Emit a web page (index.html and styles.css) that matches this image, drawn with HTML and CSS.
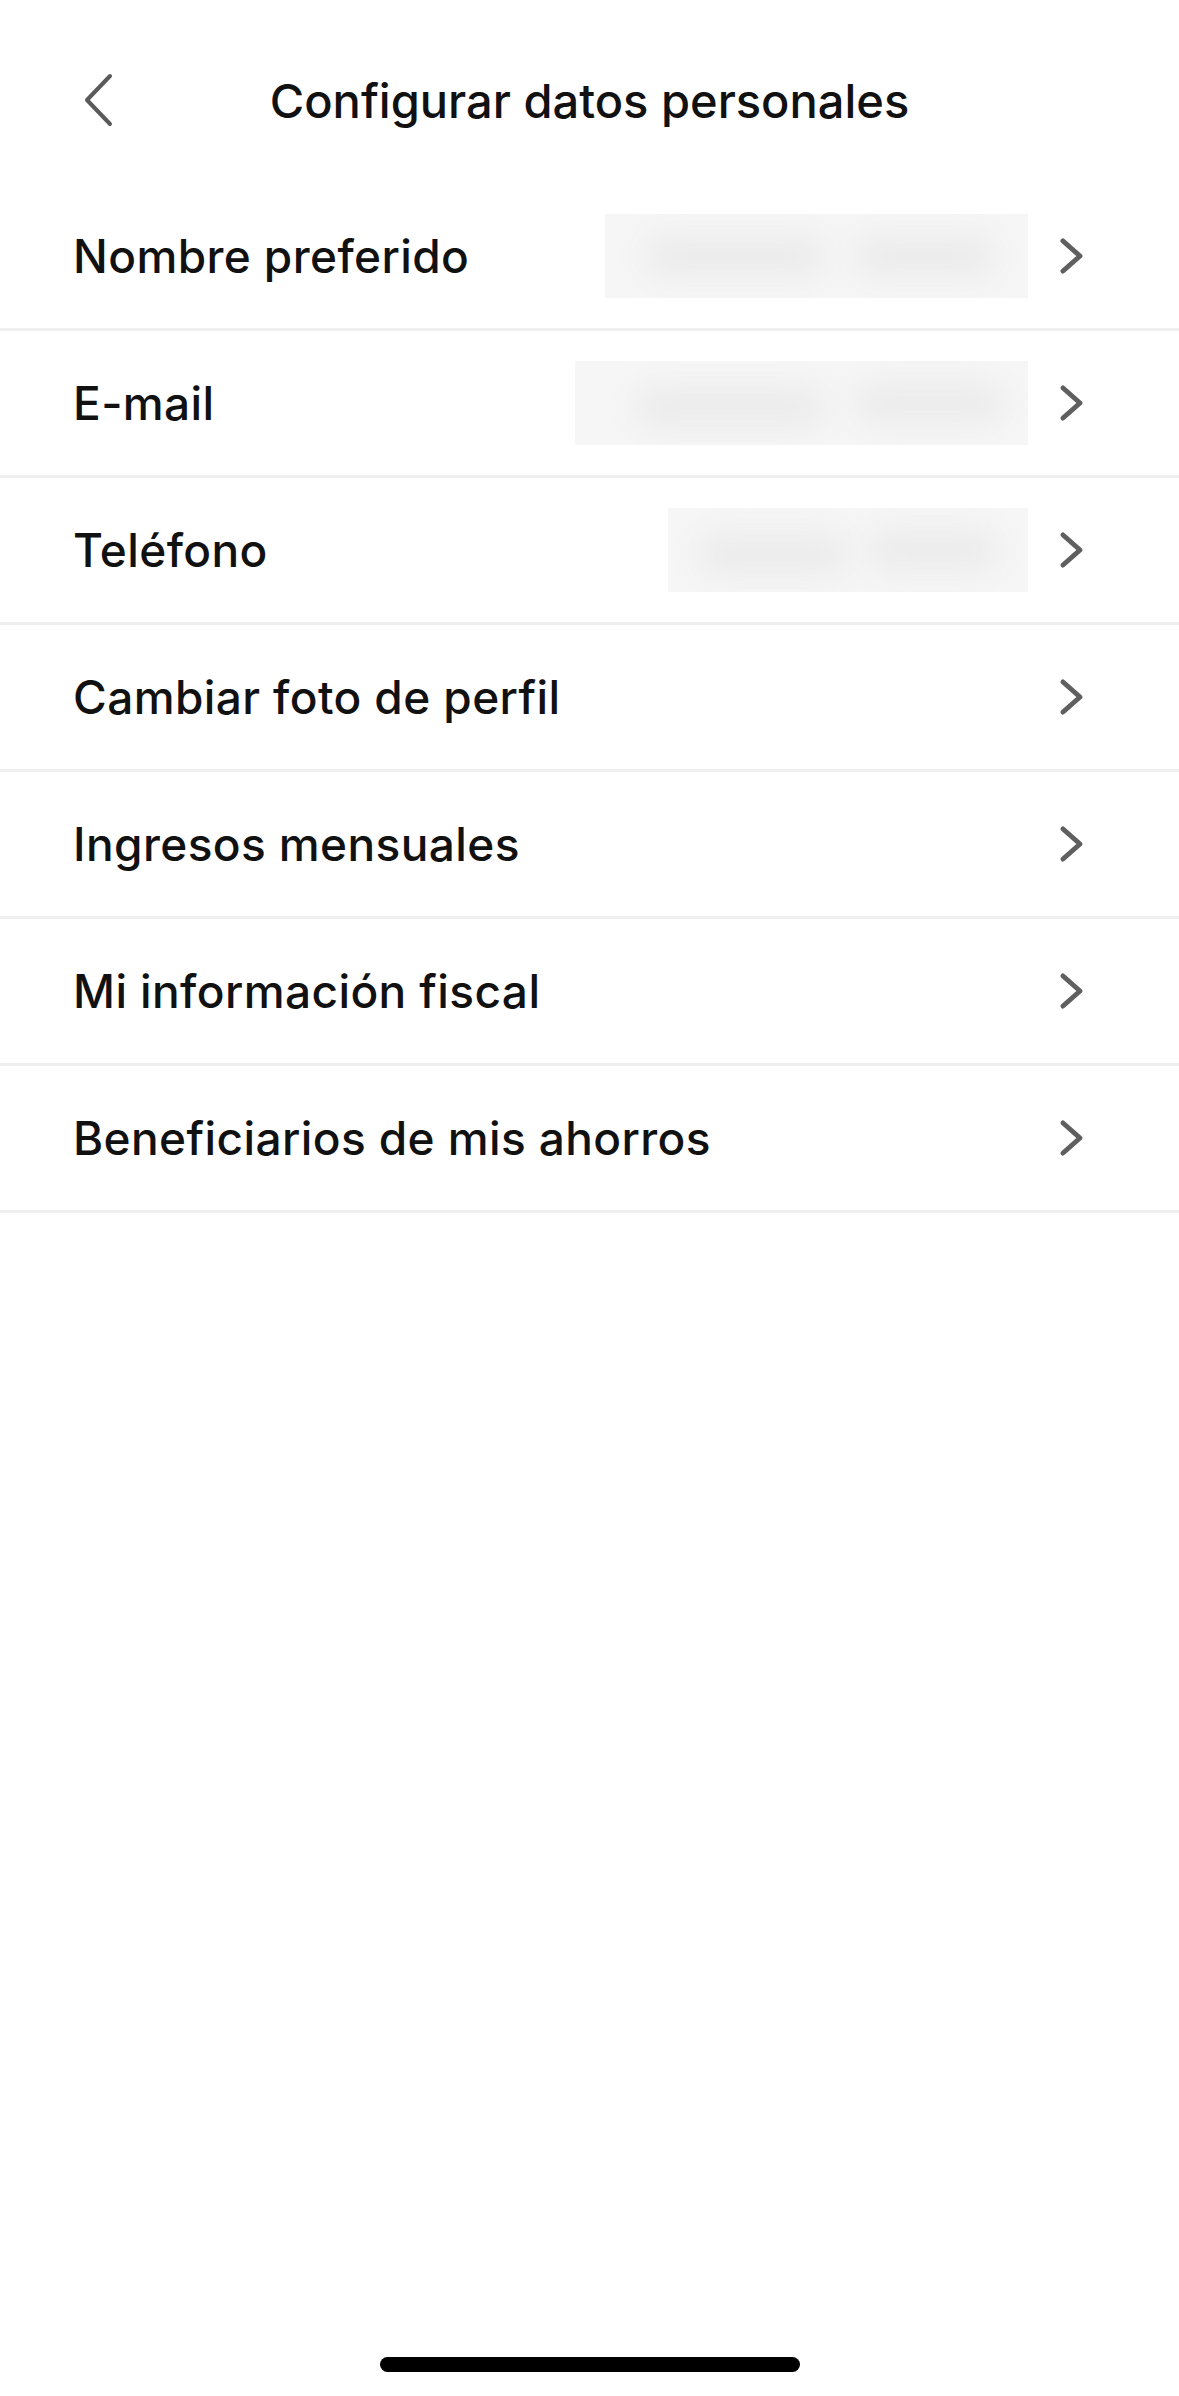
FILE: index.html
```html
<!DOCTYPE html>
<html lang="es">
<head>
<meta charset="utf-8">
<title>Configurar datos personales</title>
<link rel="stylesheet" href="styles.css">
</head>
<body>
<div class="screen">
  <header class="header">
    <div class="back">
      <svg width="32" height="54" viewBox="0 0 32 54"><polyline points="28,3 5,27 28,51" fill="none" stroke="#5a5a5a" stroke-width="4" stroke-linecap="round" stroke-linejoin="round"/></svg>
    </div>
    <h1 class="title">Configurar datos personales</h1>
    <div class="spacer"></div>
  </header>
  <ul class="list">
    <li class="row">
      <span class="label">Nombre preferido</span>
      <span class="blur blur-name"><span class="blob b1"></span><span class="blob b2"></span></span>
      <svg class="chev" width="26" height="40" viewBox="0 0 26 40"><polyline points="4,5 21,20 4,35" fill="none" stroke="#5f5f5f" stroke-width="5" stroke-linecap="round" stroke-linejoin="round"/></svg>
    </li>
    <li class="row">
      <span class="label">E-mail</span>
      <span class="blur blur-mail"><span class="blob b1"></span><span class="blob b2"></span></span>
      <svg class="chev" width="26" height="40" viewBox="0 0 26 40"><polyline points="4,5 21,20 4,35" fill="none" stroke="#5f5f5f" stroke-width="5" stroke-linecap="round" stroke-linejoin="round"/></svg>
    </li>
    <li class="row">
      <span class="label">Teléfono</span>
      <span class="blur blur-phone"><span class="blob b1"></span><span class="blob b2"></span></span>
      <svg class="chev" width="26" height="40" viewBox="0 0 26 40"><polyline points="4,5 21,20 4,35" fill="none" stroke="#5f5f5f" stroke-width="5" stroke-linecap="round" stroke-linejoin="round"/></svg>
    </li>
    <li class="row">
      <span class="label">Cambiar foto de perfil</span>
      <svg class="chev" width="26" height="40" viewBox="0 0 26 40"><polyline points="4,5 21,20 4,35" fill="none" stroke="#5f5f5f" stroke-width="5" stroke-linecap="round" stroke-linejoin="round"/></svg>
    </li>
    <li class="row">
      <span class="label">Ingresos mensuales</span>
      <svg class="chev" width="26" height="40" viewBox="0 0 26 40"><polyline points="4,5 21,20 4,35" fill="none" stroke="#5f5f5f" stroke-width="5" stroke-linecap="round" stroke-linejoin="round"/></svg>
    </li>
    <li class="row">
      <span class="label">Mi información fiscal</span>
      <svg class="chev" width="26" height="40" viewBox="0 0 26 40"><polyline points="4,5 21,20 4,35" fill="none" stroke="#5f5f5f" stroke-width="5" stroke-linecap="round" stroke-linejoin="round"/></svg>
    </li>
    <li class="row">
      <span class="label">Beneficiarios de mis ahorros</span>
      <svg class="chev" width="26" height="40" viewBox="0 0 26 40"><polyline points="4,5 21,20 4,35" fill="none" stroke="#5f5f5f" stroke-width="5" stroke-linecap="round" stroke-linejoin="round"/></svg>
    </li>
  </ul>
  <div class="home-bar"></div>
</div>
</body>
</html>
```
FILE: styles.css
```css
* { box-sizing: border-box; }
html, body { margin: 0; padding: 0; background: #ffffff; }
.screen {
  width: 1179px;
  height: 2396px;
  display: flex;
  flex-direction: column;
  font-family: Inter, Roboto, "Noto Sans", sans-serif;
  color: #111111;
  overflow: hidden;
}
.header {
  height: 184px;
  padding: 16px 0 0 0;
  display: grid;
  grid-template-columns: 1fr auto 1fr;
  align-items: center;
}
.back { padding-left: 82px; display: flex; align-items: center; }
.back svg { display: block; }
.title {
  margin: 0;
  font-size: 47px;
  font-weight: 500;
  letter-spacing: 0;
  line-height: 1;
}
.list { list-style: none; margin: 0; padding: 0; }
.row {
  height: 147px;
  border-bottom: 3px solid #efefef;
  display: flex;
  align-items: center;
  padding: 0 94px 0 73px;
}
.label {
  font-size: 46px;
  font-weight: 500;
  letter-spacing: 0.4px;
  line-height: 1;
  flex: 1;
}
.chev { display: block; flex: none; margin-left: 31px; }
.blur {
  display: block;
  height: 84px;
  background: #f6f6f6;
  position: relative;
  overflow: hidden;
  flex: none;
}
.blur-name { width: 423px; }
.blur-mail { width: 453px; }
.blur-phone { width: 360px; }
.blob {
  position: absolute;
  top: 20px;
  height: 44px;
  background: #ececec;
  border-radius: 20px;
  filter: blur(14px);
}
.blur-name .b1 { left: 40px; width: 180px; }
.blur-name .b2 { left: 250px; width: 140px; }
.blur-mail .b1 { left: 60px; width: 190px; top: 24px; }
.blur-mail .b2 { left: 280px; width: 150px; }
.blur-phone .b1 { left: 30px; width: 150px; top: 24px; }
.blur-phone .b2 { left: 200px; width: 130px; }
.home-bar {
  width: 420px;
  height: 15px;
  border-radius: 8px;
  background: #000;
  margin: auto auto 24px auto;
}
```
